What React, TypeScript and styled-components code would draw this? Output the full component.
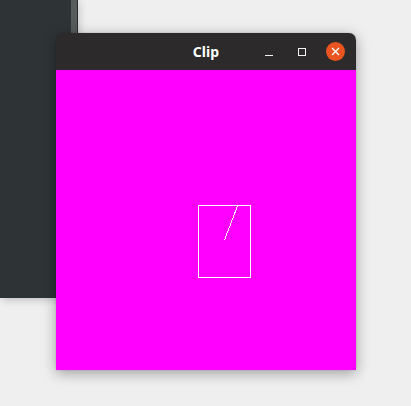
import styled, { createGlobalStyle } from 'styled-components';

const GlobalStyle = createGlobalStyle`
	html, body {
		margin: 0;
		padding: 0;
		background: #efefef;
		font-family: 'Noto Sans', 'DejaVu Sans', sans-serif;
	}
`;

const Desktop = styled.div`
	position: relative;
	width: 411px;
	height: 406px;
	overflow: hidden;
	background: #efefef;
`;

// the window lying behind, only its right edge shows
const BackWindow = styled.div`
	position: absolute;
	left: 0;
	top: 0;
	width: 71px;
	height: 298px;
	background: #2e3436;
	border-right: 6px solid #565b5c;
	box-shadow: 1px 0 0 #2a2d2e, 2px 2px 8px rgba(0, 0, 0, 0.2);
`;

const Window = styled.div`
	position: absolute;
	left: 56px;
	top: 33px;
	width: 300px;
	display: flex;
	flex-direction: column;
	border-radius: 7px 7px 0 0;
	overflow: hidden;
	box-shadow: 0 3px 14px rgba(0, 0, 0, 0.35), 0 0 1px rgba(0, 0, 0, 0.4);
`;

const TitleBar = styled.div`
	height: 37px;
	display: grid;
	grid-template-columns: 1fr auto 1fr;
	align-items: center;
	background: #2c2a2a;
	color: #fff;
`;

const Title = styled.div`
	grid-column: 2;
	font-size: 14px;
	font-weight: 700;
	letter-spacing: 0.1px;
`;

const Controls = styled.div`
	grid-column: 3;
	justify-self: end;
	display: flex;
	align-items: center;
	gap: 7px;
	padding-right: 8px;
`;

const ControlButton = styled.div`
	width: 26px;
	height: 26px;
	display: flex;
	align-items: center;
	justify-content: center;
`;

const MinimizeMark = styled.div`
	width: 8px;
	height: 1px;
	margin-top: 8px;
	background: #f2f2f2;
`;

const MaximizeMark = styled.div`
	width: 6px;
	height: 6px;
	border: 1px solid #f2f2f2;
`;

const CloseCircle = styled.div`
	width: 19px;
	height: 19px;
	border-radius: 50%;
	background: #e95420;
	display: flex;
	align-items: center;
	justify-content: center;
`;

const Canvas = styled.div`
	height: 300px;
	background: #ff00ff;
`;

export default function App() {
	return (
		<>
			<GlobalStyle />
			<Desktop>
				<BackWindow />
				<Window>
					<TitleBar>
						<Title>Clip</Title>
						<Controls>
							<ControlButton>
								<MinimizeMark />
							</ControlButton>
							<ControlButton>
								<MaximizeMark />
							</ControlButton>
							<ControlButton>
								<CloseCircle>
									<svg width="9" height="9" viewBox="0 0 9 9">
										<path d="M1 1 L8 8 M8 1 L1 8" stroke="#fff" strokeWidth="1.4" />
									</svg>
								</CloseCircle>
							</ControlButton>
						</Controls>
					</TitleBar>
					<Canvas>
						<svg width="300" height="300" viewBox="0 0 300 300" shapeRendering="crispEdges">
							<rect x="142.5" y="135.5" width="52" height="72" fill="none" stroke="#fff" strokeWidth="1" />
							<line x1="181.5" y1="136" x2="168.5" y2="170" stroke="#fff" strokeWidth="1" />
						</svg>
					</Canvas>
				</Window>
			</Desktop>
		</>
	);
}
